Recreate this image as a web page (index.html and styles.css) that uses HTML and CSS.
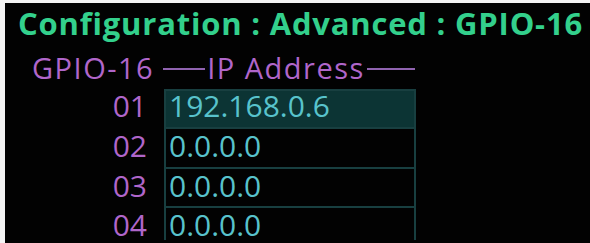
FILE: index.html
```html
<!DOCTYPE html>
<html>
<head>
<meta charset="utf-8">
<link rel="stylesheet" href="styles.css">
</head>
<body>
<div class="screen">
  <div class="title">Configuration : Advanced : GPIO-16</div>
  <div class="header">
    <span class="hname">GPIO-16</span>
    <span class="rule rule-left"></span>
    <span class="hlabel">IP Address</span>
    <span class="rule rule-right"></span>
  </div>
  <div class="rows">
    <div class="num">01</div><div class="cell selected">192.168.0.6</div>
    <div class="num">02</div><div class="cell">0.0.0.0</div>
    <div class="num">03</div><div class="cell">0.0.0.0</div>
    <div class="num">04</div><div class="cell last">0.0.0.0</div>
  </div>
</div>
</body>
</html>
```
FILE: styles.css
```css
html, body {
  margin: 0;
  padding: 0;
  background: #f4f4f4;
  overflow: hidden;
}
.screen {
  margin: 3px 0 0 5px;
  height: 240px;
  overflow: hidden;
  background: #020202;
  font-family: "Open Sans", "DejaVu Sans", sans-serif;
}
.title {
  color: #33d08c;
  font-weight: 700;
  font-size: 31px;
  letter-spacing: 0.8px;
  line-height: 40px;
  padding-left: 13px;
  white-space: nowrap;
}
.header {
  display: flex;
  align-items: center;
  height: 40px;
  padding: 5px 0 1px 27px;
  color: #b066ca;
  font-size: 29px;
  line-height: 40px;
  letter-spacing: 1.5px;
}
.hname { margin-right: 9px; }
.rule {
  height: 2px;
  margin-top: 1px;
  background: #9063b0;
}
.rule-left { width: 42px; margin-right: 2px; }
.rule-right { width: 48px; margin-left: 2px; }
.rows {
  display: grid;
  grid-template-columns: 142px 252px;
  grid-template-rows: 40px 40px 39px 32px;
  column-gap: 17px;
  font-size: 30px;
}
.num {
  color: #b066ca;
  text-align: right;
  padding-top: 2px;
  line-height: 29px;
}
.cell {
  color: #58c3cc;
  border: 2px solid #183f40;
  border-top-width: 0;
  padding: 2px 0 0 3px;
  line-height: 29px;
}
.cell.selected {
  background: #0c3434;
  border-top-width: 2px;
  padding-top: 0;
}
.cell.last {
  border-bottom-width: 0;
}
```
